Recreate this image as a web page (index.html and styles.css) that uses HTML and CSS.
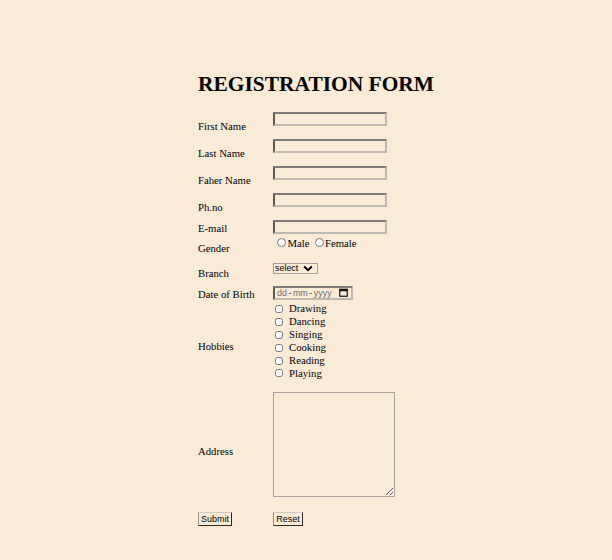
FILE: index.html
```html
<!DOCTYPE html>
<html lang="en">
<head>
<meta charset="utf-8">
<title>Registration Form</title>
<link rel="stylesheet" href="styles.css">
</head>
<body>
<div class="page">
  <h1 class="title">REGISTRATION FORM</h1>
  <form class="form">
    <span class="lbl">First Name</span>
    <input class="text" type="text">

    <span class="lbl">Last Name</span>
    <input class="text" type="text">

    <span class="lbl">Faher Name</span>
    <input class="text" type="text">

    <span class="lbl">Ph.no</span>
    <input class="text" type="text">

    <span class="lbl lbl-email">E-mail</span>
    <input class="text" type="text">

    <span class="lbl">Gender</span>
    <div class="radios">
      <label class="opt"><input class="radio" type="radio" name="g">Male</label>
      <label class="opt"><input class="radio" type="radio" name="g">Female</label>
    </div>

    <span class="lbl lbl-branch">Branch</span>
    <select class="select"><option>select</option></select>

    <span class="lbl lbl-dob">Date of Birth</span>
    <span class="date"><span class="date-txt"><span class="ph">dd</span><span class="sep">-</span><span class="ph">mm</span><span class="sep">-</span><span class="ph">yyyy</span></span><svg class="cal" width="9" height="9" viewBox="0 0 9 9"><rect x="0.75" y="1.25" width="7.5" height="7" fill="none" stroke="#111" stroke-width="1.2"/><rect x="0.75" y="1.25" width="7.5" height="2" fill="#111"/></svg></span>

    <span class="lbl lbl-hob">Hobbies</span>
    <div class="checks">
      <label class="chk"><input class="box" type="checkbox">Drawing</label>
      <label class="chk"><input class="box" type="checkbox">Dancing</label>
      <label class="chk"><input class="box" type="checkbox">Singing</label>
      <label class="chk"><input class="box" type="checkbox">Cooking</label>
      <label class="chk"><input class="box" type="checkbox">Reading</label>
      <label class="chk"><input class="box" type="checkbox">Playing</label>
    </div>

    <span class="lbl lbl-addr">Address</span>
    <textarea class="area"></textarea>

    <button class="btn btn-submit" type="submit">Submit</button>
    <button class="btn btn-reset" type="reset">Reset</button>
  </form>
</div>
</body>
</html>
```

FILE: styles.css
```css
html, body {
  margin: 0;
  padding: 0;
  background: #faebd7;
}

body {
  width: 612px;
  height: 560px;
  overflow: hidden;
  font-family: "Liberation Serif", "Times New Roman", serif;
  color: #000;
}

.page {
  padding-left: 198px;
}

.title {
  margin: 0;
  padding-top: 72.6px;
  font-family: "Liberation Serif", "Times New Roman", serif;
  font-weight: bold;
  font-size: 21.44px;
  line-height: 22px;
}

.form {
  margin: 17.4px 0 0 0;
  display: grid;
  grid-template-columns: 75px auto;
  grid-template-rows: 27px 27px 27px 27px 14px 27px 25px 15px 91px 120px 14px;
  justify-items: start;
  align-items: start;
}

.lbl {
  font-size: 10.72px;
  line-height: 14px;
  margin-top: 7.4px;
  white-space: nowrap;
}

.lbl-email { margin-top: 1.4px; }
.lbl-branch { margin-top: 4.9px; }
.lbl-dob { margin-top: 1.4px; }
.lbl-hob { margin-top: 38.4px; }
.lbl-addr { margin-top: 52.4px; }

.text {
  box-sizing: border-box;
  width: 114px;
  height: 14px;
  margin: 0;
  padding: 0 2px;
  background: transparent;
  border-style: solid;
  border-width: 2px;
  border-color: #7f7b76 #bdb8b0 #bdb8b0 #5e5a56;
  font-size: 9px;
}

.radios {
  display: flex;
  align-items: center;
  margin-top: 1.8px;
  font-size: 10.72px;
  line-height: 14px;
}

.opt {
  display: flex;
  align-items: center;
}

.radio {
  width: 9px;
  height: 9px;
  margin: 0 1.5px 0 4px;
}

.opt + .opt .radio {
  margin-left: 5px;
}

.select {
  box-sizing: border-box;
  width: 45px;
  height: 11px;
  margin-top: 2px;
  padding: 0 0 0 1px;
  font-family: "Liberation Sans", Arial, sans-serif;
  font-size: 8.93px;
  line-height: 9px;
  color: #000;
  background: transparent url("data:image/svg+xml;utf8,<svg xmlns='http://www.w3.org/2000/svg' width='10' height='7' viewBox='0 0 10 7'><path d='M1.2 1.5 L5 5.2 L8.8 1.5' fill='none' stroke='%23000' stroke-width='2'/></svg>") no-repeat right 4px center;
  border: 1.5px solid #a29e99;
  border-radius: 0;
  appearance: none;
  -webkit-appearance: none;
}

.date {
  box-sizing: border-box;
  display: flex;
  align-items: center;
  justify-content: space-between;
  width: 80px;
  height: 14px;
  padding: 0 3px 0 2px;
  border: 2px solid;
  border-color: #7f7b76 #bdb8b0 #bdb8b0 #5e5a56;
  font-family: "Liberation Sans", Arial, sans-serif;
  font-size: 8.93px;
  line-height: 10px;
}

.date-txt {
  display: flex;
  gap: 1.5px;
}

.ph { color: #6f6f6f; }
.sep { color: #333; }

.cal { display: block; }

.checks {
  display: flex;
  flex-direction: column;
  padding-top: 1.5px;
  font-size: 10.72px;
  line-height: 12.9px;
}

.chk {
  display: flex;
  align-items: center;
}

.box {
  width: 8px;
  height: 8px;
  margin: 0 6px 0 2px;
}

.area {
  box-sizing: border-box;
  width: 122px;
  height: 105px;
  margin: 0;
  background: transparent;
  border: 1.5px solid #a8a39c;
  resize: both;
}

.btn {
  box-sizing: border-box;
  height: 14px;
  margin: 0;
  padding: 0;
  font-family: "Liberation Sans", Arial, sans-serif;
  font-size: 8.93px;
  line-height: 10px;
  color: #000;
  background: transparent;
  border: 1.5px solid;
  border-color: #cfcac3 #2b2a28 #2b2a28 #9a958f;
  border-radius: 0;
}

.btn-submit { width: 34px; }
.btn-reset { width: 30px; }
```
